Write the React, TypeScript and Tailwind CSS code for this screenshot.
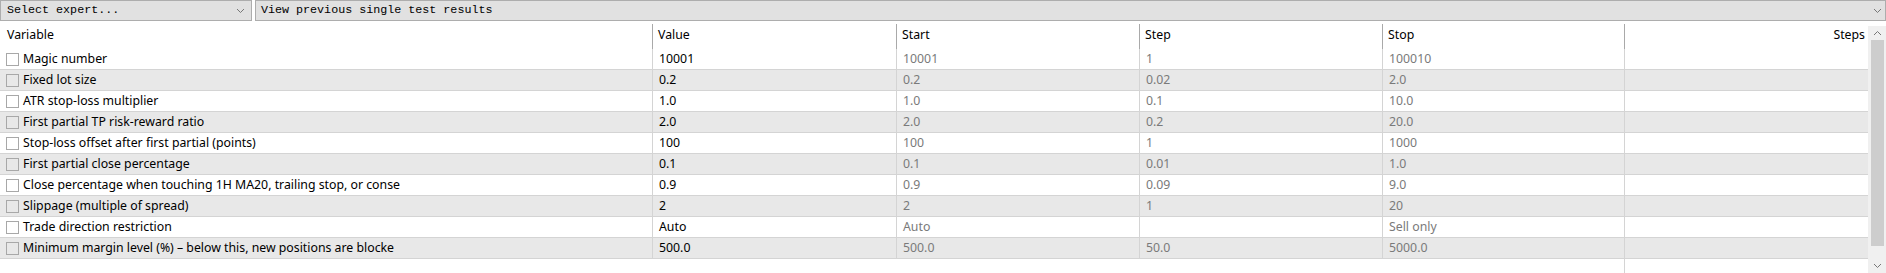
import React from "react";

type Row = {
  name: string;
  value: string;
  start: string;
  step: string;
  stop: string;
};

const rows: Row[] = [
  { name: "Magic number", value: "10001", start: "10001", step: "1", stop: "100010" },
  { name: "Fixed lot size", value: "0.2", start: "0.2", step: "0.02", stop: "2.0" },
  { name: "ATR stop-loss multiplier", value: "1.0", start: "1.0", step: "0.1", stop: "10.0" },
  { name: "First partial TP risk-reward ratio", value: "2.0", start: "2.0", step: "0.2", stop: "20.0" },
  { name: "Stop-loss offset after first partial (points)", value: "100", start: "100", step: "1", stop: "1000" },
  { name: "First partial close percentage", value: "0.1", start: "0.1", step: "0.01", stop: "1.0" },
  {
    name: "Close percentage when touching 1H MA20, trailing stop, or conse",
    value: "0.9",
    start: "0.9",
    step: "0.09",
    stop: "9.0",
  },
  { name: "Slippage (multiple of spread)", value: "2", start: "2", step: "1", stop: "20" },
  { name: "Trade direction restriction", value: "Auto", start: "Auto", step: "", stop: "Sell only" },
  {
    name: "Minimum margin level (%) \u2013 below this, new positions are blocke",
    value: "500.0",
    start: "500.0",
    step: "50.0",
    stop: "5000.0",
  },
];

function Chevron({ up = false }: { up?: boolean }) {
  return (
    <svg width="9" height="6" viewBox="0 0 9 6" fill="none" stroke="#777" strokeWidth="1">
      {up ? <polyline points="1,5 4.5,1.5 8,5" /> : <polyline points="1,1 4.5,4.5 8,1" />}
    </svg>
  );
}

export default function App() {
  return (
    <div className="w-[1886px] h-[273px] bg-white overflow-hidden text-[12.3px] text-black font-['Noto_Sans','Liberation_Sans',sans-serif]">
      {/* Toolbar */}
      <div className="flex h-[21px] gap-[3px] font-['Liberation_Mono',monospace] text-[11.7px]">
        <div className="w-[252px] flex items-center justify-between border border-[#adadad] bg-[#e1e1e1] pl-[6px] pr-[6px]">
          <span>Select expert...</span>
          <Chevron />
        </div>
        <div className="flex-1 flex items-center justify-between border border-[#adadad] bg-[#e1e1e1] pl-[5px] pr-[3px]">
          <span>View previous single test results</span>
          <Chevron />
        </div>
      </div>

      <div className="flex h-[252px]">
        <div className="w-[1868px] flex flex-col">
          {/* Header */}
          <div className="flex h-[27px] mt-px">
            <div className="w-[652px] shrink-0 flex items-center pl-[7px]">Variable</div>
            <div className="w-[244px] shrink-0 flex items-center pl-[6px] relative">
              <span className="absolute left-0 top-[2px] bottom-0 w-px bg-[#a9a9a9]" />
              Value
            </div>
            <div className="w-[243px] shrink-0 flex items-center pl-[6px] relative">
              <span className="absolute left-0 top-[2px] bottom-0 w-px bg-[#a9a9a9]" />
              Start
            </div>
            <div className="w-[243px] shrink-0 flex items-center pl-[6px] relative">
              <span className="absolute left-0 top-[2px] bottom-0 w-px bg-[#a9a9a9]" />
              Step
            </div>
            <div className="w-[242px] shrink-0 flex items-center pl-[6px] relative">
              <span className="absolute left-0 top-[2px] bottom-0 w-px bg-[#a9a9a9]" />
              Stop
            </div>
            <div className="flex-1 flex items-center justify-end pr-[3px] relative">
              <span className="absolute left-0 top-[2px] bottom-0 w-px bg-[#a9a9a9]" />
              Steps
            </div>
          </div>

          {/* Rows */}
          {rows.map((r, i) => (
            <div
              key={r.name}
              className={`flex h-[21px] border-b border-[#d4d4d4] ${i % 2 === 1 ? "bg-[#e8e8e8]" : "bg-white"}`}
            >
              <div className="w-[652px] shrink-0 flex items-center pl-[6px] gap-[4px] whitespace-nowrap overflow-hidden">
                <span className="w-[13px] h-[13px] border border-[#a8a8a8] shrink-0" />
                <span>{r.name}</span>
              </div>
              <div className="w-[244px] shrink-0 flex items-center pl-[6px] border-l border-[#d4d4d4]">{r.value}</div>
              <div className="w-[243px] shrink-0 flex items-center pl-[6px] border-l border-[#d4d4d4] text-[#7a7a7a]">{r.start}</div>
              <div className="w-[243px] shrink-0 flex items-center pl-[6px] border-l border-[#d4d4d4] text-[#7a7a7a]">{r.step}</div>
              <div className="w-[242px] shrink-0 flex items-center pl-[6px] border-l border-[#d4d4d4] text-[#7a7a7a]">{r.stop}</div>
              <div className="flex-1 border-l border-[#d4d4d4]" />
            </div>
          ))}

          {/* Empty area */}
          <div className="flex-1 flex">
            <div className="w-[1624px] shrink-0" />
            <div className="flex-1 border-l border-[#d4d4d4]" />
          </div>
        </div>

        {/* Scrollbar */}
        <div className="flex-1 flex flex-col items-center bg-[#f0f0f0] mt-[5px]">
          <div className="h-[14px] flex items-center justify-center">
            <Chevron up />
          </div>
          <div className="w-[13px] h-[206px] bg-[#cdcdcd]" />
          <div className="flex-1" />
          <div className="h-[14px] flex items-center justify-center">
            <Chevron />
          </div>
        </div>
      </div>
    </div>
  );
}
